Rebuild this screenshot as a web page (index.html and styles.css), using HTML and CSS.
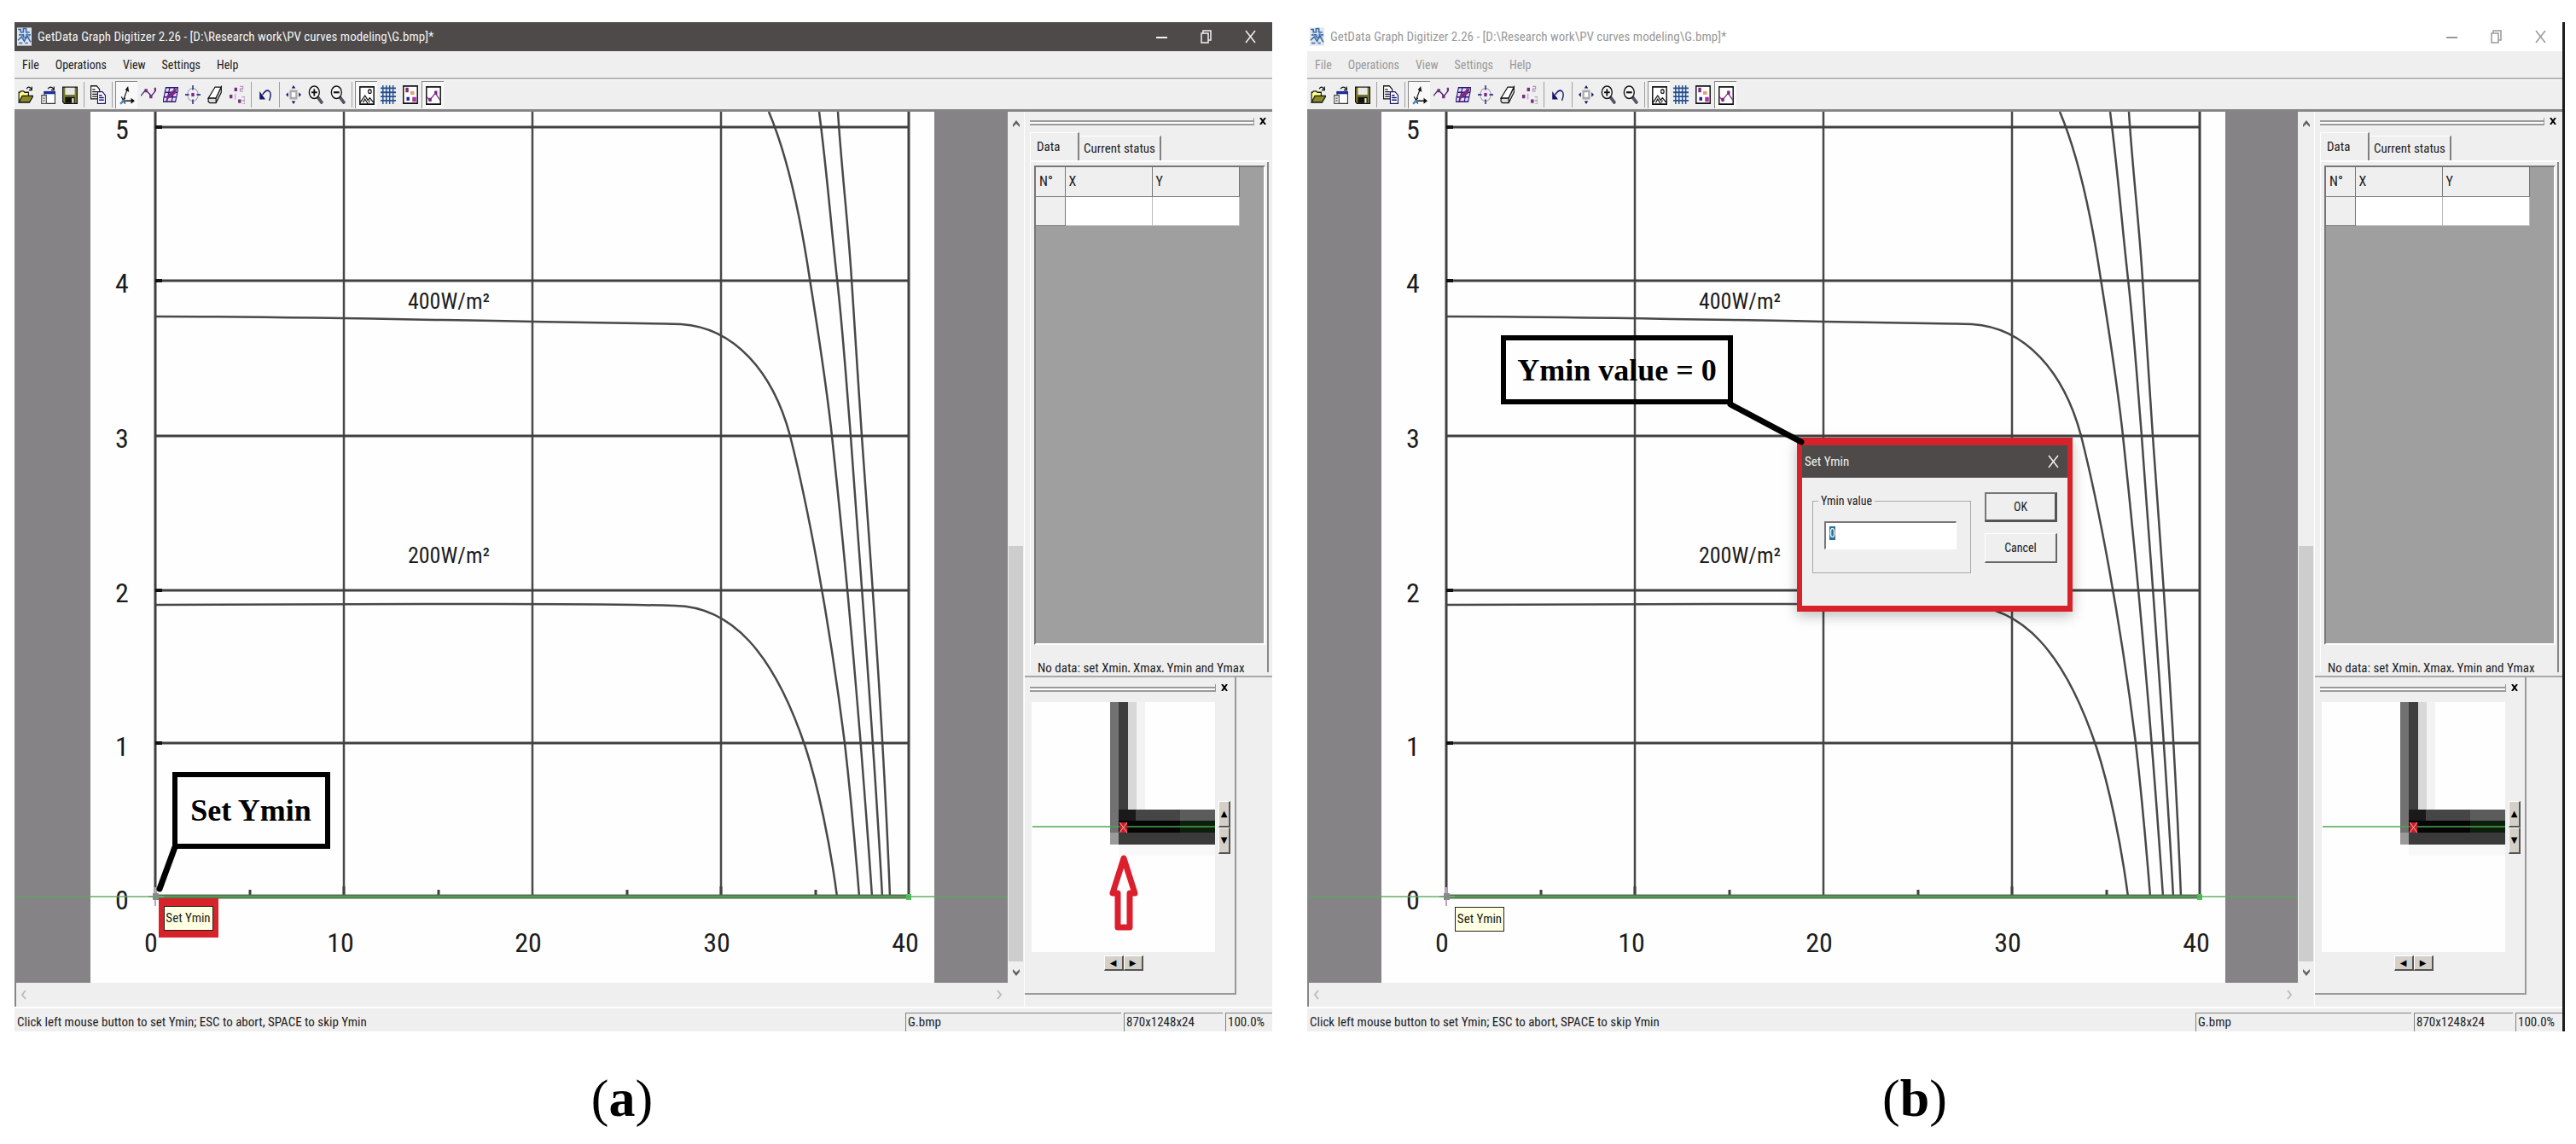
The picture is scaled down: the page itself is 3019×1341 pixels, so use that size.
FILE: index.html
```html
<!DOCTYPE html>
<html lang="en">
<head>
<meta charset="utf-8">
<title>GetData Graph Digitizer: setting Ymin</title>
<link rel="stylesheet" href="styles.css">
</head>
<body>
<svg class="defs" aria-hidden="true">
  <symbol id="i-app" viewBox="0 0 16 20"><rect width="16" height="20" fill="#dfe6ee"/><path d="M1 2h3v3h3V1h3v4h4M2 8h5v3h4V8h4M1 14l4-4 3 5 3-6 4 7M2 17h4M9 17h3" fill="none" stroke="#3a66a4" stroke-width="1.500"/><path d="M4 7l3 5 4-6 3 5" fill="none" stroke="#6f9fd0"/></symbol>
  <symbol id="i-open" viewBox="0 0 16 16" preserveAspectRatio="none"><path d="M1 14V6h1l1-1h3l1 1h4v3" fill="#ffff8c" stroke="#111"/><path d="M1 14.500l3.500-5.500H16l-4 5.500z" fill="#8a8a2a" stroke="#111"/><path d="M9 3q2-3 5 0M14.500 1v3h-3" fill="none" stroke="#111"/></symbol>
  <symbol id="i-export" viewBox="0 0 16 16" preserveAspectRatio="none"><path d="M4.500 5.500h11v10h-11z" fill="#fff" stroke="#333"/><path d="M4 5h12v2.500H4z" fill="#1c2c9c"/><path d="M1.500 8.500h5v7h-5z" fill="#eee" stroke="#555"/><path d="M3 11h2M3 13h2" stroke="#555"/><path d="M8 3q3-3 6 0M14.500 1v3h-3" fill="none" stroke="#111"/></symbol>
  <symbol id="i-save" viewBox="0 0 16 16" preserveAspectRatio="none"><path d="M.5 1.500h15v14H2l-1.500-1.500z" fill="#77772c" stroke="#111"/><path d="M3 2h10v6H3z" fill="#e8e8e8"/><path d="M3 10h10v5H3z" fill="#111"/><path d="M10 11h2v4h-2z" fill="#eee"/></symbol>
  <symbol id="i-copy" viewBox="0 0 16 16" preserveAspectRatio="none"><path d="M.5.500h6l3 3v8h-9z" fill="#fff" stroke="#111"/><path d="M2 3.500h3M2 5.500h5M2 7.500h5M2 9.500h5" stroke="#111"/><path d="M7.500 5.500h5l3 3v7h-8z" fill="#fff" stroke="#15156c"/><path d="M9 8.500h3M9 10.500h5M9 12.500h5" stroke="#15156c"/></symbol>
  <symbol id="i-axes" viewBox="0 0 16 16" preserveAspectRatio="none"><path d="M4 12L8.500 2M3 12.500h12M1 15l5-5M2 9l4 6" fill="none" stroke="#111"/><path d="M9 0l1 5-4-2zM16 12.500L12 10v5z" fill="#111"/><path d="M1 15l4-3" stroke="#3f8fd0" stroke-width="2"/></symbol>
  <symbol id="i-line" viewBox="0 0 16 16" preserveAspectRatio="none"><path d="M0 9l5-5 6 5 5-5" fill="none" stroke="#3a1560"/><path d="M4 3h3v3H4zM9 8h3v3H9zM14 2h2v3h-2z" fill="#7a2a80"/></symbol>
  <symbol id="i-mesh" viewBox="0 0 16 16" preserveAspectRatio="none"><path d="M3 2h13l-3 12H0z" fill="#e6d8f6" stroke="#2a1a78"/><path d="M7 2L4 14M12 2L9 14M2 6h13M1 10h13" stroke="#2a1a78"/><path d="M9 5l6-3-2 5-7 4-3 3 1-5z" fill="#7a2a80"/></symbol>
  <symbol id="i-target" viewBox="0 0 16 16" preserveAspectRatio="none"><circle cx="8" cy="8" r="5.500" fill="none" stroke="#99b" stroke-width=".8"/><path d="M8 0v4M8 12v4M0 8h4M12 8h4" stroke="#15156c" stroke-width="1.200"/><path d="M6.500 6.500h3v3h-3z" fill="#7a2a80"/></symbol>
  <symbol id="i-eraser" viewBox="0 0 16 16" preserveAspectRatio="none"><path d="M1 11L8 1.500h6.500L9 11z" fill="#fff" stroke="#111"/><path d="M1 11h8v4H2.500L1 14zM9 11l5.500-9.500V6L9 15" fill="#ddd" stroke="#111"/></symbol>
  <symbol id="i-points" viewBox="0 0 16 16" preserveAspectRatio="none"><path d="M5 2h3v3H5zM0 8h3v3H0zM9 12h3v3H9z" fill="#7a2a80"/><path d="M11 1h3v2h-3v2h3M6 7v5M13 10h3v6h-3M13 13h3" fill="none" stroke="#a88ab4" stroke-width=".8"/></symbol>
  <symbol id="i-undo" viewBox="0 0 16 16" preserveAspectRatio="none"><path d="M5 8q4-5 7-3t0 8" fill="none" stroke="#15156c" stroke-width="1.200"/><path d="M2 5v7h6z" fill="#15156c"/></symbol>
  <symbol id="i-move" viewBox="0 0 16 16" preserveAspectRatio="none"><path d="M5 5h6v6H5z" fill="#fff" stroke="#aaa" stroke-width="2"/><path d="M8 0l2 2.500H6zM8 16l2-2.500H6zM0 8l2.500-2v4zM16 8l-2.500-2v4z" fill="#15156c"/></symbol>
  <symbol id="i-zin" viewBox="0 0 16 16" preserveAspectRatio="none"><path d="M10 10l5 5.500" stroke="#556" stroke-width="3"/><circle cx="6.500" cy="6" r="5.300" fill="#f6f6f6" stroke="#111" stroke-width="1.200"/><path d="M6.500 3v6M3.500 6h6" stroke="#111" stroke-width="1.600"/></symbol>
  <symbol id="i-zout" viewBox="0 0 16 16" preserveAspectRatio="none"><path d="M10 10l5 5.500" stroke="#556" stroke-width="3"/><circle cx="6.500" cy="6" r="5.300" fill="#f6f6f6" stroke="#111" stroke-width="1.200"/><path d="M3.500 6h6" stroke="#111" stroke-width="1.600"/></symbol>
  <symbol id="i-pic" viewBox="0 0 16 16" preserveAspectRatio="none"><path d="M.7.700h14.600v14.600H.7z" fill="#fff" stroke="#111" stroke-width="1.300"/><circle cx="11" cy="4.500" r="1.600" fill="none" stroke="#111"/><path d="M1 14l5-6 3 4 2-2 4 4M4 14l2-3 3 4M10 14l1-2" fill="none" stroke="#111"/></symbol>
  <symbol id="i-grid" viewBox="0 0 16 16" preserveAspectRatio="none"><path d="M2.500 0v16M6 0v16M9.500 0v16M13 0v16M0 2.500h16M0 6h16M0 9.500h16M0 13h16" stroke="#234f90" stroke-width="1.300"/></symbol>
  <symbol id="i-dots" viewBox="0 0 16 16" preserveAspectRatio="none"><path d="M.7.700h14.600v14.600H.7z" fill="#fff" stroke="#111" stroke-width="1.300"/><path d="M3 2h3v4H3z" fill="#7a2a80"/><path d="M8 5h4v3H8z" fill="#ee9a70"/><path d="M4 10h3v3H4z" fill="#1c1c9c"/><path d="M10 10h4v4h-4z" fill="#b030a0"/></symbol>
  <symbol id="i-wave" viewBox="0 0 16 16" preserveAspectRatio="none"><path d="M.7.700h14.600v14.600H.7z" fill="#fff" stroke="#111" stroke-width="1.300"/><path d="M1 9l3 3 6-6 5 6" fill="none" stroke="#7a2a80"/><path d="M3 10h3v3H3zM9 4h3v3H9z" fill="#7a2a80"/></symbol>
  <symbol id="i-min" viewBox="0 0 13 16"><path d="M0 9h13" stroke="currentColor" stroke-width="2"/></symbol>
  <symbol id="i-max" viewBox="0 0 13 16"><path d="M1 4h8v11H1zM3 4V1h9v11H9" fill="none" stroke="currentColor" stroke-width="1.500"/></symbol>
  <symbol id="i-close" viewBox="0 0 13 16"><path d="M1 1l11 14M12 1L1 15" fill="none" stroke="currentColor" stroke-width="1.500"/></symbol>
  <symbol id="i-x" viewBox="0 0 8 8"><path d="M1 0l6 8M7 0L1 8" stroke="#000" stroke-width="2"/></symbol>
  <symbol id="i-up" viewBox="0 0 10 10"><path d="M1 9V6l4-5 4 5v3L5 5z" fill="#606060"/></symbol>
  <symbol id="i-down" viewBox="0 0 10 10"><path d="M1 1v3l4 5 4-5V1L5 5z" fill="#606060"/></symbol>
  <symbol id="i-left" viewBox="0 0 10 12"><path d="M7 1L3 6l4 5" fill="none" stroke="#bdbdbd" stroke-width="2"/></symbol>
  <symbol id="i-right" viewBox="0 0 10 12"><path d="M3 1l4 5-4 5" fill="none" stroke="#bdbdbd" stroke-width="2"/></symbol>

  <symbol id="plot" viewBox="105 131 989 1021">
    <rect x="105" y="131" width="989" height="1021" fill="#fefefe"/>
    <g fill="none" stroke="#484848" stroke-width="2.500">
      <path d="M402 131V1051M623 131V1051M844 131V1051"/>
      <path d="M181 371C330 371 450 374 623 377S760 379 797 380C860 384 905 436 925 511C945 590 970 720 989 871Q998 950 1006 1051"/>
      <path d="M181 709C330 708 450 708 578 708S750 709 790 710C855 711 905 763 943 876C958 922 972 990 980 1051"/>
      <path d="M900 131C922 183 938 260 948 327C958 390 968 455 974 511C990 660 1008 860 1021 1051"/>
      <path d="M959 131C968 200 973 265 980 327S991 450 996 511C1008 680 1022 850 1033 1051"/>
      <path d="M981 131C985 196 993 262 997 327S1005 450 1009 511C1021 680 1034 850 1042 1051"/>
    </g>
    <g fill="none" stroke="#404040" stroke-width="3">
      <path d="M181 131V1051M1064 131V1051"/>
      <path d="M181 149H1064M181 329H1064M181 511H1064M181 692H1064M181 871H1064"/>
      <path d="M292 1043v8M402 1039v12M513 1043v8M734 1043v8M844 1039v12M955 1043v8"/>
    </g>
    <path d="M181 149h8M181 329h8M181 692h8M181 871h8" stroke="#111" stroke-width="4"/>
    <path d="M181 1051H1064" stroke="#53714f" stroke-width="5"/>
    <rect x="1061" y="1048" width="6" height="7" fill="#4fc05a"/>
    <path d="M173 1051h18M181 1040v22" stroke="#b9a5bd" stroke-width="2"/>
    <rect x="178" y="1047" width="7" height="8" fill="#8d8790"/>
  </symbol>

  <symbol id="magnified" viewBox="1209 823 215 293">
    <rect x="1209" y="823" width="215" height="293" fill="#fefefe"/>
    <rect x="1332" y="823" width="10" height="126" fill="#f3f3f3"/>
    <rect x="1321" y="823" width="11" height="126" fill="#d8d8d8"/>
    <rect x="1301" y="823" width="10" height="153" fill="#727272"/>
    <rect x="1301" y="976" width="10" height="14" fill="#9a9a9a"/>
    <rect x="1311" y="823" width="11" height="126" fill="#3e3e3e"/>
    <rect x="1311" y="949" width="113" height="14" fill="#464646"/>
    <rect x="1383" y="949" width="41" height="14" fill="#5c5c5c"/>
    <rect x="1311" y="949" width="20" height="14" fill="#1a1a1a"/>
    <rect x="1311" y="962" width="113" height="14" fill="#050505"/>
    <rect x="1383" y="962" width="41" height="14" fill="#0c1f0c"/>
    <rect x="1311" y="976" width="113" height="14" fill="#3a3a3a"/>
    <rect x="1311" y="990" width="113" height="13" fill="#f8f8f8"/>
    <path d="M1210 969H1424" stroke="#4fa453" stroke-width="1.500"/>
    <rect x="1312" y="964" width="9" height="12" fill="#c81e28"/>
    <path d="M1312 964l9 12M1321 964l-9 12" stroke="#f0b0b0"/>
  </symbol>
</svg>

<main class="figures">
  <figure class="figure">
    <section class="window" aria-label="GetData, picking the point">
      <header class="titlebar">
        <svg class="app-icon"><use href="#i-app"/></svg>
        <h1 class="title">GetData Graph Digitizer 2.26 - [D:\Research work\PV curves modeling\G.bmp]*</h1>
        <div class="controls">
          <button class="control" aria-label="Minimize"><svg><use href="#i-min"/></svg></button>
          <button class="control" aria-label="Restore"><svg><use href="#i-max"/></svg></button>
          <button class="control" aria-label="Close"><svg><use href="#i-close"/></svg></button>
        </div>
      </header>
      <nav class="menu">
        <button>File</button><button>Operations</button><button>View</button><button>Settings</button><button>Help</button>
      </nav>
      <div class="toolbar">
        <button class="tool" aria-label="Open"><svg><use href="#i-open"/></svg></button>
        <button class="tool" aria-label="Export"><svg><use href="#i-export"/></svg></button>
        <button class="tool" aria-label="Save"><svg><use href="#i-save"/></svg></button>
        <span class="sep"></span>
        <button class="tool" aria-label="Copy"><svg><use href="#i-copy"/></svg></button>
        <span class="sep"></span>
        <button class="tool pressed" aria-label="Set scale"><svg><use href="#i-axes"/></svg></button>
        <button class="tool" aria-label="Trace line"><svg><use href="#i-line"/></svg></button>
        <button class="tool" aria-label="Digitize area"><svg><use href="#i-mesh"/></svg></button>
        <button class="tool" aria-label="Point capture"><svg><use href="#i-target"/></svg></button>
        <button class="tool" aria-label="Eraser"><svg><use href="#i-eraser"/></svg></button>
        <button class="tool" aria-label="Reorder points"><svg><use href="#i-points"/></svg></button>
        <span class="sep"></span>
        <button class="tool" aria-label="Undo"><svg><use href="#i-undo"/></svg></button>
        <span class="sep"></span>
        <button class="tool" aria-label="Fit"><svg><use href="#i-move"/></svg></button>
        <button class="tool" aria-label="Zoom in"><svg><use href="#i-zin"/></svg></button>
        <button class="tool" aria-label="Zoom out"><svg><use href="#i-zout"/></svg></button>
        <span class="sep"></span>
        <button class="tool pressed" aria-label="Show image"><svg><use href="#i-pic"/></svg></button>
        <button class="tool" aria-label="Show grid"><svg><use href="#i-grid"/></svg></button>
        <button class="tool" aria-label="Show points"><svg><use href="#i-dots"/></svg></button>
        <button class="tool pressed" aria-label="Show lines"><svg><use href="#i-wave"/></svg></button>
      </div>
      <div class="workspace">
        <div class="viewer">
          <div class="canvas">
            <div class="sheet">
              <svg class="plot" viewBox="105 131 989 1021" role="img" aria-label="Current against voltage">
                <use href="#plot" x="105" y="131" width="989" height="1021"/>
                <g class="axis-label">
                  <text x="142" y="163">5</text><text x="142" y="343">4</text><text x="142" y="525">3</text><text x="142" y="706">2</text><text x="142" y="886">1</text><text x="142" y="1066">0</text>
                  <text x="176" y="1116">0</text><text x="398" y="1116">10</text><text x="618" y="1116">20</text><text x="839" y="1116">30</text><text x="1060" y="1116">40</text>
                </g>
                <g class="curve-label"><text x="525" y="362">400W/m²</text><text x="525" y="660">200W/m²</text></g>
                <path class="leader" d="M204 993L186 1042"/>
              </svg>
              <div class="callout callout-a">Set Ymin</div>
              <div class="highlight"><span class="tip">Set Ymin</span></div>
            </div>
            <span class="guide"></span>
          </div>
          <div class="vscroll"><svg><use href="#i-up"/></svg><span class="thumb"></span><svg><use href="#i-down"/></svg></div>
          <div class="hscroll"><svg><use href="#i-left"/></svg><svg><use href="#i-right"/></svg></div>
        </div>
        <aside class="sidebar">
          <section class="data-pane">
            <div class="grip"><span class="bars"></span><button class="shut" aria-label="Close data"><svg><use href="#i-x"/></svg></button></div>
            <div class="tabs"><button class="tab active">Data</button><button class="tab">Current status</button></div>
            <div class="page">
              <div class="sheet-view">
                <table class="data">
                  <thead><tr><th class="num">N°</th><th>X</th><th>Y</th></tr></thead>
                  <tbody><tr><th class="num"></th><td></td><td></td></tr></tbody>
                </table>
              </div>
              <p class="hint">No data: set Xmin, Xmax, Ymin and Ymax</p>
            </div>
          </section>
          <section class="zoom-pane">
            <div class="grip"><span class="bars"></span><button class="shut" aria-label="Close magnifier"><svg><use href="#i-x"/></svg></button></div>
            <div class="magnifier">
              <svg class="pixels" viewBox="1209 823 215 293" role="img" aria-label="Magnified origin">
                <use href="#magnified" x="1209" y="823" width="215" height="293"/>
                <path class="pointer" d="M1317 1006L1304 1047H1310V1087H1324V1047H1330Z"/>
              </svg>
              <div class="spin tall"><button aria-label="Up">▲</button><button aria-label="Down">▼</button></div>
              <div class="spin wide"><button aria-label="Left">◀</button><button aria-label="Right">▶</button></div>
            </div>
          </section>
        </aside>
      </div>
      <footer class="status">
        <span class="message">Click left mouse button to set Ymin; ESC to abort, SPACE to skip Ymin</span>
        <span class="cell file">G.bmp</span><span class="cell size">870x1248x24</span><span class="cell scale">100.0%</span>
      </footer>
    </section>
    <figcaption class="caption">(<b>a</b>)</figcaption>
  </figure>

  <figure class="figure">
    <section class="window inactive" aria-label="GetData, entering the value">
      <header class="titlebar">
        <svg class="app-icon"><use href="#i-app"/></svg>
        <h1 class="title">GetData Graph Digitizer 2.26 - [D:\Research work\PV curves modeling\G.bmp]*</h1>
        <div class="controls">
          <button class="control" aria-label="Minimize"><svg><use href="#i-min"/></svg></button>
          <button class="control" aria-label="Restore"><svg><use href="#i-max"/></svg></button>
          <button class="control" aria-label="Close"><svg><use href="#i-close"/></svg></button>
        </div>
      </header>
      <nav class="menu">
        <button>File</button><button>Operations</button><button>View</button><button>Settings</button><button>Help</button>
      </nav>
      <div class="toolbar">
        <button class="tool" aria-label="Open"><svg><use href="#i-open"/></svg></button>
        <button class="tool" aria-label="Export"><svg><use href="#i-export"/></svg></button>
        <button class="tool" aria-label="Save"><svg><use href="#i-save"/></svg></button>
        <span class="sep"></span>
        <button class="tool" aria-label="Copy"><svg><use href="#i-copy"/></svg></button>
        <span class="sep"></span>
        <button class="tool pressed" aria-label="Set scale"><svg><use href="#i-axes"/></svg></button>
        <button class="tool" aria-label="Trace line"><svg><use href="#i-line"/></svg></button>
        <button class="tool" aria-label="Digitize area"><svg><use href="#i-mesh"/></svg></button>
        <button class="tool" aria-label="Point capture"><svg><use href="#i-target"/></svg></button>
        <button class="tool" aria-label="Eraser"><svg><use href="#i-eraser"/></svg></button>
        <button class="tool" aria-label="Reorder points"><svg><use href="#i-points"/></svg></button>
        <span class="sep"></span>
        <button class="tool" aria-label="Undo"><svg><use href="#i-undo"/></svg></button>
        <span class="sep"></span>
        <button class="tool" aria-label="Fit"><svg><use href="#i-move"/></svg></button>
        <button class="tool" aria-label="Zoom in"><svg><use href="#i-zin"/></svg></button>
        <button class="tool" aria-label="Zoom out"><svg><use href="#i-zout"/></svg></button>
        <span class="sep"></span>
        <button class="tool pressed" aria-label="Show image"><svg><use href="#i-pic"/></svg></button>
        <button class="tool" aria-label="Show grid"><svg><use href="#i-grid"/></svg></button>
        <button class="tool" aria-label="Show points"><svg><use href="#i-dots"/></svg></button>
        <button class="tool pressed" aria-label="Show lines"><svg><use href="#i-wave"/></svg></button>
      </div>
      <div class="workspace">
        <div class="viewer">
          <div class="canvas">
            <div class="sheet">
              <svg class="plot" viewBox="105 131 989 1021" role="img" aria-label="Current against voltage">
                <use href="#plot" x="105" y="131" width="989" height="1021"/>
                <g class="axis-label">
                  <text x="142" y="163">5</text><text x="142" y="343">4</text><text x="142" y="525">3</text><text x="142" y="706">2</text><text x="142" y="886">1</text><text x="142" y="1066">0</text>
                  <text x="176" y="1116">0</text><text x="398" y="1116">10</text><text x="618" y="1116">20</text><text x="839" y="1116">30</text><text x="1060" y="1116">40</text>
                </g>
                <g class="curve-label"><text x="525" y="362">400W/m²</text><text x="525" y="660">200W/m²</text></g>
              </svg>
              <div class="callout callout-b">Ymin value = 0</div>
              <span class="tip tip-b">Set Ymin</span>
              <form class="dialog">
                <header class="dialog-title"><h2>Set Ymin</h2><button type="button" class="control" aria-label="Close dialog"><svg><use href="#i-close"/></svg></button></header>
                <div class="dialog-body">
                  <fieldset><legend>Ymin value</legend><input id="ymin" type="text" value="0" aria-label="Ymin value"></fieldset>
                  <div class="actions"><button type="button" class="push default">OK</button><button type="button" class="push">Cancel</button></div>
                </div>
              </form>
              <svg class="plot over" viewBox="105 131 989 1021" aria-hidden="true"><path class="leader" d="M514 474L597 518"/></svg>
            </div>
            <span class="guide"></span>
          </div>
          <div class="vscroll"><svg><use href="#i-up"/></svg><span class="thumb"></span><svg><use href="#i-down"/></svg></div>
          <div class="hscroll"><svg><use href="#i-left"/></svg><svg><use href="#i-right"/></svg></div>
        </div>
        <aside class="sidebar">
          <section class="data-pane">
            <div class="grip"><span class="bars"></span><button class="shut" aria-label="Close data"><svg><use href="#i-x"/></svg></button></div>
            <div class="tabs"><button class="tab active">Data</button><button class="tab">Current status</button></div>
            <div class="page">
              <div class="sheet-view">
                <table class="data">
                  <thead><tr><th class="num">N°</th><th>X</th><th>Y</th></tr></thead>
                  <tbody><tr><th class="num"></th><td></td><td></td></tr></tbody>
                </table>
              </div>
              <p class="hint">No data: set Xmin, Xmax, Ymin and Ymax</p>
            </div>
          </section>
          <section class="zoom-pane">
            <div class="grip"><span class="bars"></span><button class="shut" aria-label="Close magnifier"><svg><use href="#i-x"/></svg></button></div>
            <div class="magnifier">
              <svg class="pixels" viewBox="1209 823 215 293" role="img" aria-label="Magnified origin">
                <use href="#magnified" x="1209" y="823" width="215" height="293"/>
              </svg>
              <div class="spin tall"><button aria-label="Up">▲</button><button aria-label="Down">▼</button></div>
              <div class="spin wide"><button aria-label="Left">◀</button><button aria-label="Right">▶</button></div>
            </div>
          </section>
        </aside>
      </div>
      <footer class="status">
        <span class="message">Click left mouse button to set Ymin; ESC to abort, SPACE to skip Ymin</span>
        <span class="cell file">G.bmp</span><span class="cell size">870x1248x24</span><span class="cell scale">100.0%</span>
      </footer>
    </section>
    <figcaption class="caption">(<b>b</b>)</figcaption>
  </figure>
</main>
<script src="script.js"></script>
</body>
</html>
```
FILE: script.js
```js
// The dialog opens with its value selected, ready to be typed over.
const field = document.getElementById('ymin');
field.focus({ preventScroll: true });
field.select();
```
FILE: styles.css
```css
* { box-sizing: border-box; }
body {
  margin: 0;
  background: #fff;
  color: #1c1c1c;
  font: 15px/20px "Roboto Condensed", "Open Sans", sans-serif;
}
button, input { font: inherit; color: inherit; }
button { padding: 0; border: 0; background: none; }
h1, h2, p { margin: 0; font: inherit; }
svg { display: block; }
.defs { position: absolute; width: 0; height: 0; }

.figures {
  display: grid;
  grid-template-columns: 1fr 1fr;
  gap: 41px;
  padding: 26px 13px 0 17px;
}
.figure { margin: 0; min-width: 0; }
.window { background: #efefef; }
.inactive { border-right: 3px solid #1c1c1c; }

.titlebar {
  display: flex;
  align-items: center;
  height: 34px;
  padding-left: 3px;
  background: #4d4a49;
  color: #f2f2f2;
}
.inactive .titlebar { background: #fff; color: #999; }
.app-icon { width: 17px; height: 26px; margin-right: 7px; }
.title { flex: 1; white-space: nowrap; }
.controls { display: flex; }
.control { display: grid; place-items: center; width: 52px; height: 28px; }
.control svg { width: 13px; height: 16px; }

.menu {
  display: flex;
  gap: 19px;
  height: 33px;
  padding: 0 9px;
  border-bottom: 2px solid #b4b4b4;
  box-shadow: 0 1px #fff;
  font-size: 14px;
}
.inactive .menu { color: #999; }
.toolbar {
  display: flex;
  align-items: center;
  height: 38px;
  padding-top: 1px;
  border-bottom: 3px solid #868686;
}
.tool { display: grid; place-items: center; width: 26px; height: 32px; }
.tool svg { width: 18px; height: 22px; }
.pressed { background: #f8f8f8; border-left: 1px solid #888; border-top: 1px solid #888; }
.sep { width: 1px; height: 30px; margin: 0 3px; background: #a0a0a0; }

.workspace { display: flex; }
.viewer {
  flex: 1;
  min-width: 0;
  display: grid;
  grid-template-columns: 1fr 19px;
  border-left: 2px solid #868686;
}
.canvas {
  position: relative;
  display: flex;
  justify-content: center;
  background: #858385;
}
.sheet { position: relative; width: 989px; flex: none; }
.plot { width: 100%; height: auto; }
.over { position: absolute; inset: 0; pointer-events: none; }
.axis-label, .curve-label {
  font: 32px "Roboto Condensed", "Liberation Sans", sans-serif;
  fill: #1c1c1c;
  text-anchor: middle;
}
.curve-label { font-size: 26px; }
.leader { stroke: #000; stroke-width: 7; stroke-linecap: round; }
.guide {
  position: absolute;
  left: 0;
  right: 0;
  top: 919px;
  height: 2px;
  background: #59a95c;
  opacity: .7;
}
.callout {
  position: absolute;
  display: grid;
  place-items: center;
  border: 6px solid #000;
  color: #000;
  font: bold 36px "Liberation Serif", serif;
  white-space: nowrap;
}
.callout-a { left: 96px; top: 774px; width: 185px; height: 90px; }
.callout-b { left: 140px; top: 262px; width: 272px; height: 81px; }
.highlight {
  position: absolute;
  z-index: 1;
  left: 80px;
  top: 922px;
  padding: 9px 6px 8px;
  background: #d8222a;
}
.tip {
  display: block;
  width: 58px;
  height: 29px;
  border: 1px solid #222;
  background: #ffffe1;
  line-height: 27px;
  text-align: center;
  white-space: nowrap;
}
.tip-b { position: absolute; left: 86px; top: 932px; }

.vscroll {
  display: flex;
  flex-direction: column;
  align-items: center;
  gap: 8px;
  padding: 9px 0 7px;
}
.vscroll svg { width: 10px; height: 10px; }
.thumb { flex: 1; width: 17px; margin-top: 482px; background: #cdcdcd; }
.hscroll {
  grid-column: 1 / -1;
  display: flex;
  align-items: center;
  justify-content: space-between;
  height: 28px;
  padding: 0 24px 0 4px;
}
.hscroll svg { width: 10px; height: 12px; }

.sidebar {
  width: 291px;
  display: flex;
  flex-direction: column;
  border-left: 1px solid #fff;
}
.data-pane {
  flex: 1;
  display: flex;
  flex-direction: column;
  padding: 2px 4px 4px 6px;
  border-bottom: 2px solid #a8a8a8;
}
.grip { display: flex; align-items: center; gap: 6px; height: 18px; }
.bars {
  flex: 1;
  height: 9px;
  border: solid #999;
  border-width: 0 1px 2px 0;
  background: linear-gradient(#efefef 3px, #999 3px, #999 5px, #fff 5px);
}
.shut { display: grid; place-items: center; width: 8px; height: 12px; margin-right: 8px; }
.data-pane .shut { margin-right: 3px; }
.shut svg { width: 8px; height: 8px; }
.tabs { display: flex; align-items: flex-end; height: 33px; margin-top: 4px; }
.tab {
  height: 29px;
  padding: 0 5px;
  border-top: 1px solid #fff;
  border-right: 2px solid #808080;
}
.tab.active { width: 58px; height: 33px; padding: 0 7px; border-left: 1px solid #fff; text-align: left; }
.page {
  flex: 1;
  display: flex;
  flex-direction: column;
  padding: 4px 4px 0;
  border: solid #fff;
  border-width: 2px 0 0 1px;
  box-shadow: inset -2px 0 #888;
}
.sheet-view {
  flex: 1;
  border: solid;
  border-width: 2px;
  border-color: #777 #fff #fff #777;
  background: #9f9f9f;
}
.data { border-collapse: collapse; table-layout: fixed; width: 238px; }
.data th, .data td {
  width: 102px;
  height: 34px;
  padding: 0 4px;
  background: #efefef;
  border: solid #777;
  border-width: 0 1px 1px 0;
  font-size: 16px;
  font-weight: 400;
  text-align: left;
}
.data .num { width: 34px; }
.data td { background: #fff; border-color: #bbb; }
.hint { height: 14px; margin: 18px 0 0 4px; line-height: 18px; overflow: hidden; white-space: nowrap; }

.zoom-pane {
  width: 248px;
  margin-bottom: 14px;
  padding: 3px 0 26px 6px;
  border: solid #999;
  border-width: 0 2px 2px 0;
}
.magnifier {
  display: grid;
  grid-template-columns: 215px 14px;
  gap: 4px;
  align-items: center;
  margin: 8px 0 0 2px;
}
.pixels { width: 215px; height: 293px; }
.pointer { fill: #fff; stroke: #dc1f2c; stroke-width: 7; stroke-linejoin: round; }
.spin { display: flex; justify-content: center; }
.spin.tall { flex-direction: column; }
.spin button {
  width: 23px;
  height: 18px;
  border: solid;
  border-width: 1px 2px 2px 1px;
  border-color: #fff #555 #555 #fff;
  background: #d4d0c8;
  color: #000;
  font: 10px/12px "DejaVu Sans", sans-serif;
}
.spin.tall button { width: 14px; height: 31px; }

.status {
  display: flex;
  gap: 3px;
  height: 29px;
  padding-top: 5px;
  border-top: 2px solid #fff;
  line-height: 22px;
  white-space: nowrap;
}
.message { flex: 1; padding-left: 3px; }
.cell { padding-left: 2px; border-left: 1px solid #808080; border-top: 1px solid #808080; line-height: 20px; }
.file { width: 253px; }
.size { width: 116px; }
.scale { width: 55px; }

.dialog {
  position: absolute;
  left: 487px;
  top: 382px;
  width: 323px;
  border: solid #d8222a;
  border-width: 9px 6px 7px;
  background: #efefef;
  box-shadow: 0 5px 14px rgb(0 0 0 / .25);
}
.dialog-title {
  display: flex;
  align-items: center;
  justify-content: space-between;
  height: 38px;
  padding-left: 3px;
  background: #4d4a49;
  color: #f2f2f2;
}
.dialog-title .control { width: 34px; }
.dialog-body { display: flex; align-items: flex-start; gap: 16px; padding: 17px 12px 38px; font-size: 14px; }
fieldset {
  flex: 1;
  min-width: 0;
  height: 95px;
  margin: 0;
  padding: 14px 16px 0 13px;
  border: 1px solid #a8a8a8;
}
legend { margin-left: -7px; padding: 0 3px; line-height: 20px; }
fieldset input {
  display: block;
  width: 100%;
  height: 33px;
  padding: 0 4px 6px;
  border: solid;
  border-width: 2px 1px 1px 2px;
  border-color: #777 #fff #fff #777;
  outline: 0;
  background: #fff;
}
fieldset input::selection { background: #2b6f96; color: #fff; }
.actions { display: grid; gap: 13px; }
.push {
  width: 85px;
  height: 35px;
  border: solid;
  border-width: 1px 2px 2px 1px;
  border-color: #fff #666 #666 #fff;
}
.push.default { border-color: #777 #555 #555 #777; border-width: 2px 3px 3px 2px; }

.caption {
  margin-top: 42px;
  padding-right: 50px;
  text-align: center;
  color: #000;
  font: 62px/72px "Liberation Serif", serif;
}
```
